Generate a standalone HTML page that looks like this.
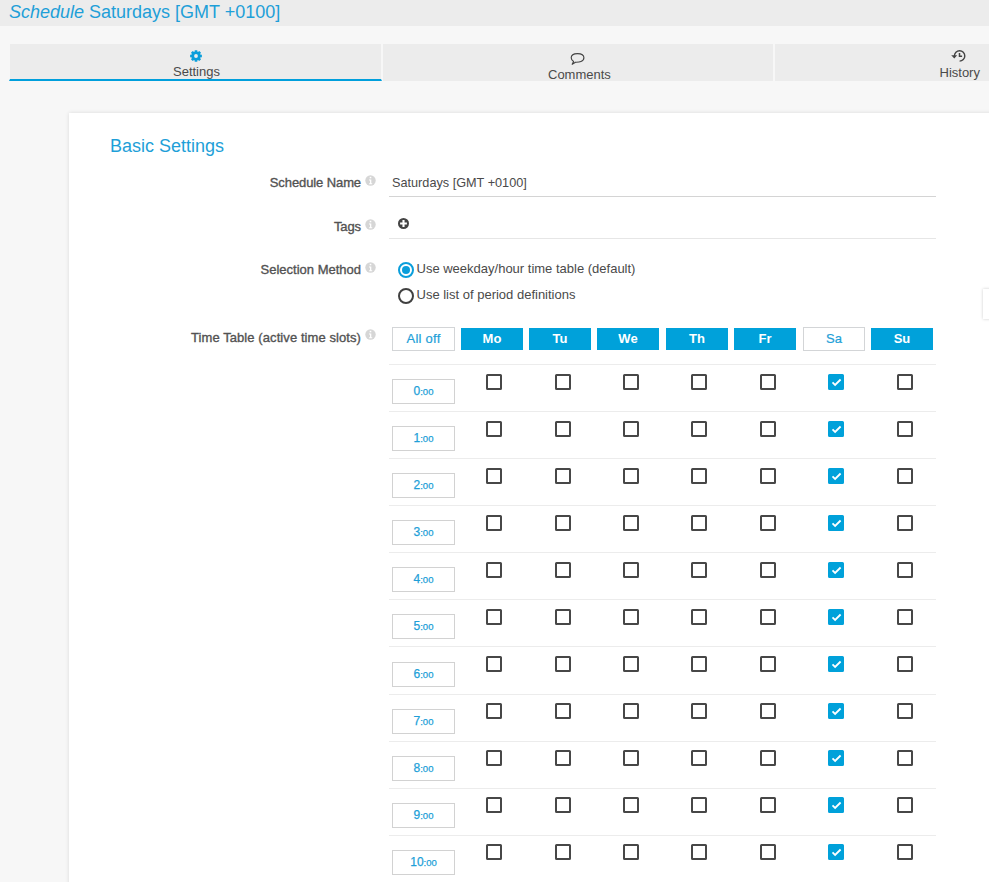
<!DOCTYPE html>
<html><head><meta charset="utf-8">
<style>
html,body{margin:0;padding:0;}
body{width:989px;height:882px;overflow:hidden;position:relative;background:#f7f7f7;font-family:"Liberation Sans",sans-serif;color:#4a4a4a;}
.a{position:absolute;white-space:nowrap;}
#hdr{left:0;top:0;width:989px;height:26px;background:#ececec;}
#title{left:9px;top:1px;font-size:18px;line-height:22px;color:#1e9fd8;}
.tab{position:absolute;top:44px;height:37px;background:#ececec;}
.tabl{position:absolute;font-size:13px;line-height:15px;color:#4a4a4a;}
#card{left:69px;top:113px;width:1000px;height:800px;background:#fff;box-shadow:0 0 4px rgba(0,0,0,0.12);}
#bs{left:110px;top:135px;font-size:18px;line-height:22px;color:#1e9fd8;}
.lbl{position:absolute;right:628px;font-size:13px;line-height:15px;color:#525252;-webkit-text-stroke:0.35px #525252;letter-spacing:-0.1px;}
.info{position:absolute;width:11px;height:11px;}
.info svg,.a svg,svg{display:block;}
.line{position:absolute;left:389px;width:547px;height:1px;background:#e6e6e6;}
.txt{position:absolute;font-size:13px;line-height:15px;color:#4a4a4a;}
.radio{position:absolute;left:397px;width:16px;height:16px;box-sizing:border-box;border:2px solid #404040;border-radius:50%;}
.radio.on{border-color:#0a9edb;border-width:2px;}
.radio.on:after{content:"";position:absolute;left:2px;top:2px;width:8px;height:8px;border-radius:50%;background:#0a9edb;}
.btn{position:absolute;top:328px;width:62px;height:22px;background:#00a1da;color:#fff;font-weight:bold;font-size:13px;line-height:22px;text-align:center;}
.btn.off{top:327px;width:60px;height:22px;border:1px solid #d3d5d7;background:#fff;color:#1e9fd8;font-weight:normal;-webkit-text-stroke:0.2px #1e9fd8;}
.hr{position:absolute;left:389px;width:547px;height:1px;background:#ececec;}
.hour{position:absolute;left:392px;width:61px;height:23px;border:1px solid #d2d2d2;background:#fff;color:#1e9fd8;text-align:center;font-size:12px;line-height:23px;-webkit-text-stroke:0.25px #1e9fd8;}
.hour small{font-size:9.5px;}
.cb{position:absolute;width:12px;height:12px;border:2px solid #474747;border-radius:1.5px;}
.cb.on{border-color:#00a1da;background:#00a1da;}
.cb.on svg{position:absolute;left:0;top:0;}
</style></head><body>
<div class="a" id="hdr"></div>
<div class="a" id="title"><i>Schedule</i> Saturdays [GMT +0100]</div>

<div class="tab" style="left:9px;width:371px;border-left:1px solid #f7f7f7;border-right:1px solid #f7f7f7;border-bottom:2px solid #009fdc;height:35px;"></div>
<div class="tab" style="left:383px;width:390px;"></div>
<div class="tab" style="left:775px;width:400px;"></div>
<svg class="a" style="left:189.6px;top:50px" width="12" height="12" viewBox="0 0 12 12"><path fill="#0a9edb" fill-rule="evenodd" d="M4.53 1.75 L4.75 0.13 L7.25 0.13 L7.47 1.75 L7.97 1.96 L9.27 0.97 L11.03 2.73 L10.04 4.03 L10.25 4.53 L11.87 4.75 L11.87 7.25 L10.25 7.47 L10.04 7.97 L11.03 9.27 L9.27 11.03 L7.97 10.04 L7.47 10.25 L7.25 11.87 L4.75 11.87 L4.53 10.25 L4.03 10.04 L2.73 11.03 L0.97 9.27 L1.96 7.97 L1.75 7.47 L0.13 7.25 L0.13 4.75 L1.75 4.53 L1.96 4.03 L0.97 2.73 L2.73 0.97 L4.03 1.96Z M6 4.1A1.9 1.9 0 1 0 6 7.9A1.9 1.9 0 1 0 6 4.1Z"/></svg>
<div class="tabl" style="left:173px;top:64px;">Settings</div>
<svg class="a" style="left:570px;top:53px" width="15" height="12" viewBox="0 0 15 12"><path fill="none" stroke="#444" stroke-width="1.15" stroke-linejoin="round" d="M5.5 9.2C9 9.3 13.9 8.8 13.9 4.8C13.9 1.3 10.5 0.6 7.5 0.6C4.5 0.6 1.2 1.3 1.2 4.8C1.2 6.5 2.2 7.6 3.6 8.4L2.2 11.3Z"/></svg>
<div class="tabl" style="left:548px;top:67px;">Comments</div>
<svg class="a" style="left:951px;top:50px" width="15" height="13" viewBox="0 0 15 13"><path fill="none" stroke="#444" stroke-width="1.4" d="M3.4 5.9A5.2 5.2 0 1 1 8.6 11.1"/><path fill="#444" d="M0.2 5.2h6L3.3 8.6z"/><path fill="none" stroke="#444" stroke-width="1.5" d="M8.5 3v3.3h2.6"/></svg>
<div class="tabl" style="left:939.5px;top:65px;">History</div>

<div class="a" id="card"></div>
<div class="a" id="bs">Basic Settings</div>

<div class="lbl" style="top:175px;">Schedule Name</div>
<div class="info" style="left:365px;top:175px;"><svg width="11" height="11" viewBox="0 0 11 11"><circle cx="5.5" cy="5.5" r="5.2" fill="#d6d6d6"/><rect x="4.7" y="1.8" width="1.6" height="1.5" fill="#fff"/><path d="M4 4.4h2.3v3.9h0.9v1H4.1v-1h0.9V5.4H4z" fill="#fff"/></svg></div>
<div class="txt" style="left:392px;top:176px;font-size:12.7px;">Saturdays [GMT +0100]</div>
<div class="line" style="top:196px;background:#d4d4d4;"></div>

<div class="lbl" style="top:219px;">Tags</div>
<div class="info" style="left:365px;top:219px;"><svg width="11" height="11" viewBox="0 0 11 11"><circle cx="5.5" cy="5.5" r="5.2" fill="#d6d6d6"/><rect x="4.7" y="1.8" width="1.6" height="1.5" fill="#fff"/><path d="M4 4.4h2.3v3.9h0.9v1H4.1v-1h0.9V5.4H4z" fill="#fff"/></svg></div>
<svg class="a" style="left:398px;top:218px" width="11" height="11" viewBox="0 0 11 11"><circle cx="5.5" cy="5.5" r="5.5" fill="#444"/><path d="M5.5 2.1v6.8M2.1 5.5h6.8" stroke="#fff" stroke-width="2.1"/></svg>
<div class="line" style="top:238px;"></div>

<div class="lbl" style="top:262px;letter-spacing:0;">Selection Method</div>
<div class="info" style="left:365px;top:262px;"><svg width="11" height="11" viewBox="0 0 11 11"><circle cx="5.5" cy="5.5" r="5.2" fill="#d6d6d6"/><rect x="4.7" y="1.8" width="1.6" height="1.5" fill="#fff"/><path d="M4 4.4h2.3v3.9h0.9v1H4.1v-1h0.9V5.4H4z" fill="#fff"/></svg></div>
<div class="radio on" style="left:397.5px;top:262px;"></div>
<div class="txt" style="left:416.5px;top:261px;">Use weekday/hour time table (default)</div>
<div class="radio" style="left:397.5px;top:288px;"></div>
<div class="txt" style="left:416.5px;top:287px;">Use list of period definitions</div>

<div class="lbl" style="top:330px;letter-spacing:0.08px;">Time Table (active time slots)</div>
<div class="info" style="left:365px;top:329px;"><svg width="11" height="11" viewBox="0 0 11 11"><circle cx="5.5" cy="5.5" r="5.2" fill="#d6d6d6"/><rect x="4.7" y="1.8" width="1.6" height="1.5" fill="#fff"/><path d="M4 4.4h2.3v3.9h0.9v1H4.1v-1h0.9V5.4H4z" fill="#fff"/></svg></div>

<div class="btn off" style="left:392px;width:61px;letter-spacing:0.25px;">All off</div>
<div class="btn" style="left:461px;">Mo</div>
<div class="btn" style="left:529px;">Tu</div>
<div class="btn" style="left:597px;">We</div>
<div class="btn" style="left:666px;">Th</div>
<div class="btn" style="left:734px;">Fr</div>
<div class="btn off" style="left:803px;">Sa</div>
<div class="btn" style="left:871px;">Su</div>

<div class="hr" style="top:364px"></div>
<div class="hour" style="top:379px">0<small>:00</small></div>
<div class="cb" style="left:486.1px;top:374px"></div>
<div class="cb" style="left:554.5px;top:374px"></div>
<div class="cb" style="left:622.9px;top:374px"></div>
<div class="cb" style="left:691.3px;top:374px"></div>
<div class="cb" style="left:759.7px;top:374px"></div>
<div class="cb on" style="left:828.1px;top:374px"><svg width="12" height="12" viewBox="0 0 12 12"><path d="M2.5 6.4L5.1 9L10.6 3.5" fill="none" stroke="#fff" stroke-width="1.8"/></svg></div>
<div class="cb" style="left:896.5px;top:374px"></div>
<div class="hr" style="top:411px"></div>
<div class="hour" style="top:426px">1<small>:00</small></div>
<div class="cb" style="left:486.1px;top:421px"></div>
<div class="cb" style="left:554.5px;top:421px"></div>
<div class="cb" style="left:622.9px;top:421px"></div>
<div class="cb" style="left:691.3px;top:421px"></div>
<div class="cb" style="left:759.7px;top:421px"></div>
<div class="cb on" style="left:828.1px;top:421px"><svg width="12" height="12" viewBox="0 0 12 12"><path d="M2.5 6.4L5.1 9L10.6 3.5" fill="none" stroke="#fff" stroke-width="1.8"/></svg></div>
<div class="cb" style="left:896.5px;top:421px"></div>
<div class="hr" style="top:458px"></div>
<div class="hour" style="top:473px">2<small>:00</small></div>
<div class="cb" style="left:486.1px;top:468px"></div>
<div class="cb" style="left:554.5px;top:468px"></div>
<div class="cb" style="left:622.9px;top:468px"></div>
<div class="cb" style="left:691.3px;top:468px"></div>
<div class="cb" style="left:759.7px;top:468px"></div>
<div class="cb on" style="left:828.1px;top:468px"><svg width="12" height="12" viewBox="0 0 12 12"><path d="M2.5 6.4L5.1 9L10.6 3.5" fill="none" stroke="#fff" stroke-width="1.8"/></svg></div>
<div class="cb" style="left:896.5px;top:468px"></div>
<div class="hr" style="top:505px"></div>
<div class="hour" style="top:520px">3<small>:00</small></div>
<div class="cb" style="left:486.1px;top:515px"></div>
<div class="cb" style="left:554.5px;top:515px"></div>
<div class="cb" style="left:622.9px;top:515px"></div>
<div class="cb" style="left:691.3px;top:515px"></div>
<div class="cb" style="left:759.7px;top:515px"></div>
<div class="cb on" style="left:828.1px;top:515px"><svg width="12" height="12" viewBox="0 0 12 12"><path d="M2.5 6.4L5.1 9L10.6 3.5" fill="none" stroke="#fff" stroke-width="1.8"/></svg></div>
<div class="cb" style="left:896.5px;top:515px"></div>
<div class="hr" style="top:552px"></div>
<div class="hour" style="top:567px">4<small>:00</small></div>
<div class="cb" style="left:486.1px;top:562px"></div>
<div class="cb" style="left:554.5px;top:562px"></div>
<div class="cb" style="left:622.9px;top:562px"></div>
<div class="cb" style="left:691.3px;top:562px"></div>
<div class="cb" style="left:759.7px;top:562px"></div>
<div class="cb on" style="left:828.1px;top:562px"><svg width="12" height="12" viewBox="0 0 12 12"><path d="M2.5 6.4L5.1 9L10.6 3.5" fill="none" stroke="#fff" stroke-width="1.8"/></svg></div>
<div class="cb" style="left:896.5px;top:562px"></div>
<div class="hr" style="top:599px"></div>
<div class="hour" style="top:614px">5<small>:00</small></div>
<div class="cb" style="left:486.1px;top:609px"></div>
<div class="cb" style="left:554.5px;top:609px"></div>
<div class="cb" style="left:622.9px;top:609px"></div>
<div class="cb" style="left:691.3px;top:609px"></div>
<div class="cb" style="left:759.7px;top:609px"></div>
<div class="cb on" style="left:828.1px;top:609px"><svg width="12" height="12" viewBox="0 0 12 12"><path d="M2.5 6.4L5.1 9L10.6 3.5" fill="none" stroke="#fff" stroke-width="1.8"/></svg></div>
<div class="cb" style="left:896.5px;top:609px"></div>
<div class="hr" style="top:646px"></div>
<div class="hour" style="top:662px">6<small>:00</small></div>
<div class="cb" style="left:486.1px;top:656px"></div>
<div class="cb" style="left:554.5px;top:656px"></div>
<div class="cb" style="left:622.9px;top:656px"></div>
<div class="cb" style="left:691.3px;top:656px"></div>
<div class="cb" style="left:759.7px;top:656px"></div>
<div class="cb on" style="left:828.1px;top:656px"><svg width="12" height="12" viewBox="0 0 12 12"><path d="M2.5 6.4L5.1 9L10.6 3.5" fill="none" stroke="#fff" stroke-width="1.8"/></svg></div>
<div class="cb" style="left:896.5px;top:656px"></div>
<div class="hr" style="top:694px"></div>
<div class="hour" style="top:709px">7<small>:00</small></div>
<div class="cb" style="left:486.1px;top:703px"></div>
<div class="cb" style="left:554.5px;top:703px"></div>
<div class="cb" style="left:622.9px;top:703px"></div>
<div class="cb" style="left:691.3px;top:703px"></div>
<div class="cb" style="left:759.7px;top:703px"></div>
<div class="cb on" style="left:828.1px;top:703px"><svg width="12" height="12" viewBox="0 0 12 12"><path d="M2.5 6.4L5.1 9L10.6 3.5" fill="none" stroke="#fff" stroke-width="1.8"/></svg></div>
<div class="cb" style="left:896.5px;top:703px"></div>
<div class="hr" style="top:741px"></div>
<div class="hour" style="top:756px">8<small>:00</small></div>
<div class="cb" style="left:486.1px;top:750px"></div>
<div class="cb" style="left:554.5px;top:750px"></div>
<div class="cb" style="left:622.9px;top:750px"></div>
<div class="cb" style="left:691.3px;top:750px"></div>
<div class="cb" style="left:759.7px;top:750px"></div>
<div class="cb on" style="left:828.1px;top:750px"><svg width="12" height="12" viewBox="0 0 12 12"><path d="M2.5 6.4L5.1 9L10.6 3.5" fill="none" stroke="#fff" stroke-width="1.8"/></svg></div>
<div class="cb" style="left:896.5px;top:750px"></div>
<div class="hr" style="top:788px"></div>
<div class="hour" style="top:803px">9<small>:00</small></div>
<div class="cb" style="left:486.1px;top:797px"></div>
<div class="cb" style="left:554.5px;top:797px"></div>
<div class="cb" style="left:622.9px;top:797px"></div>
<div class="cb" style="left:691.3px;top:797px"></div>
<div class="cb" style="left:759.7px;top:797px"></div>
<div class="cb on" style="left:828.1px;top:797px"><svg width="12" height="12" viewBox="0 0 12 12"><path d="M2.5 6.4L5.1 9L10.6 3.5" fill="none" stroke="#fff" stroke-width="1.8"/></svg></div>
<div class="cb" style="left:896.5px;top:797px"></div>
<div class="hr" style="top:835px"></div>
<div class="hour" style="top:850px">10<small>:00</small></div>
<div class="cb" style="left:486.1px;top:844px"></div>
<div class="cb" style="left:554.5px;top:844px"></div>
<div class="cb" style="left:622.9px;top:844px"></div>
<div class="cb" style="left:691.3px;top:844px"></div>
<div class="cb" style="left:759.7px;top:844px"></div>
<div class="cb on" style="left:828.1px;top:844px"><svg width="12" height="12" viewBox="0 0 12 12"><path d="M2.5 6.4L5.1 9L10.6 3.5" fill="none" stroke="#fff" stroke-width="1.8"/></svg></div>
<div class="cb" style="left:896.5px;top:844px"></div>

<div class="a" style="left:983px;top:289px;width:20px;height:30px;background:#fff;box-shadow:0 0 3px rgba(0,0,0,0.2);"></div>


</body></html>
